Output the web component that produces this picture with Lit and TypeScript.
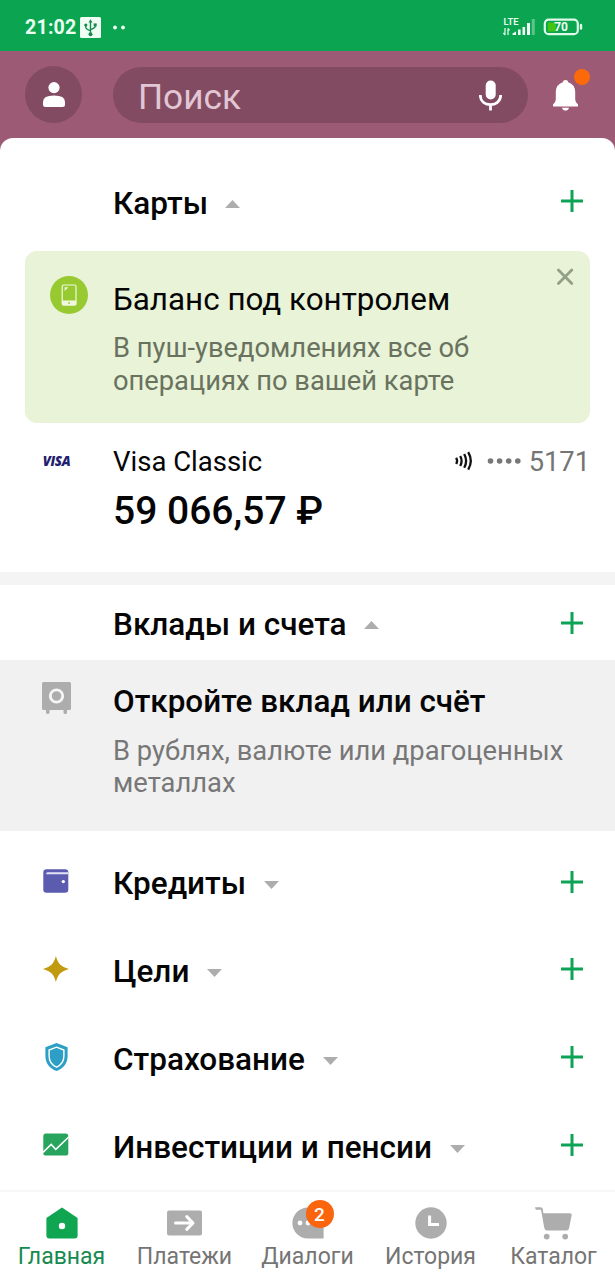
import { LitElement, html, css, svg, nothing, TemplateResult } from "lit";
import { customElement, property } from "lit/decorators.js";

const plus = svg`<path d="M0 11H22M11 0V22" stroke="#0fa356" stroke-width="3" fill="none"/>`;

const wallet = html`<svg width="26" height="24" viewBox="0 0 26 24">
  <rect x="0.3" y="0.3" width="25" height="23.4" rx="3.2" fill="#5b5bb0"/>
  <path d="M3.2 4.5Q3.4 3.2 4.8 3.2H25V5.2H3.2Z" fill="#e3e3f6"/>
  <circle cx="20.3" cy="12.6" r="1.7" fill="#fff"/></svg>`;

const star = html`<svg width="26" height="26" viewBox="0 0 26 26">
  <path d="M12.9 0C14.8 7.4 17.8 10.8 26 13C17.8 15.2 14.8 18.6 12.9 26C11 18.6 8 15.2 0 13C8 10.8 11 7.4 12.9 0Z" fill="#c29a0f"/></svg>`;

const shield = html`<svg width="23" height="28" viewBox="0 0 23 28">
  <path d="M11.5 0L22.6 4.2V13C22.6 20 18.6 25.5 11.5 28C4.4 25.5 0.4 20 0.4 13V4.2Z" fill="#2d9fc6"/>
  <path d="M11.5 4.2L18.9 7V13C18.9 18 16.3 22 11.5 24.2C6.7 22 4.1 18 4.1 13V7Z" fill="none" stroke="#fff" stroke-width="1.4"/></svg>`;

const chart = html`<svg width="26" height="23" viewBox="0 0 26 23">
  <rect x="0.3" y="0.5" width="25" height="22" rx="2.6" fill="#27a55f"/>
  <path d="M0 19.4L8.2 11.4L12.8 16.4L26 3.8" fill="none" stroke="#fff" stroke-width="1.5"/></svg>`;

@customElement("section-row")
export class SectionRow extends LitElement {
  @property() heading = "";
  @property({ type: Boolean }) open = false;
  @property({ attribute: false }) icon: TemplateResult | typeof nothing = nothing;

  static styles = css`
    :host { display: block; height: 87.8px; }
    .row { height: 100%; display: grid; grid-template-columns: 112.5px 1fr 22px; padding-right: 32.5px; align-items: center; }
    .icon { display: flex; justify-content: center; }
    .title { display: flex; align-items: center; gap: 18px; padding: 6px 0 0 0.5px; }
    .opened .title { gap: 17px; }
    .closed .caret { margin-top: 2px; }
    h2 { margin: 0; font-size: 31.5px; line-height: 36px; font-weight: 500; color: #050505; white-space: nowrap; }
    svg { display: block; }
    .plus { margin-top: 1px; }
  `;

  render() {
    return html`<div class="row ${this.open ? "opened" : "closed"}">
      <div class="icon">${this.icon}</div>
      <div class="title">
        <h2>${this.heading}</h2>
        <svg class="caret" width="15" height="8" viewBox="0 0 15 8">
          <path d=${this.open ? "M0 8L7.5 0L15 8Z" : "M0 0H15L7.5 8Z"} fill="#adadad"/>
        </svg>
      </div>
      <svg class="plus" width="22" height="22" viewBox="0 0 22 22">${plus}</svg>
    </div>`;
  }
}

@customElement("app-root")
export class AppRoot extends LitElement {
  static styles = css`
    :host { display: flex; flex-direction: column; height: 1280px; width: 615px; overflow: hidden;
      background: #fff; font-family: Roboto, "Noto Sans", sans-serif; color: #050505; }
    svg { display: block; }
    .status { height: 51px; background: #0ba551; display: flex; align-items: center; justify-content: space-between;
      padding: 3px 32px 0 25px; box-sizing: border-box; color: #eafff0; }
    .status-side { display: flex; align-items: center; }
    .clock { font-size: 19.6px; font-weight: 700; letter-spacing: 0.2px; width: 55px; }
    .top { background: #9c5a75; height: 99px; padding: 15px 36px 0 25px; box-sizing: border-box; display: flex; align-items: flex-start; }
    .avatar { width: 57px; height: 57px; border-radius: 50%; background: #834b62; display: grid; place-items: center; margin-right: 31px; }
    .search { width: 415px; height: 56px; margin-top: 1px; border-radius: 28px; background: #834b62; display: flex; align-items: center;
      justify-content: space-between; padding: 4px 26px 0 25px; box-sizing: border-box; font-size: 35.2px; color: #e2c6d3; }
    .search svg { margin-top: -4px; }
    .bell { position: relative; margin: 14px 0 0 25px; }
    .dot { position: absolute; left: 21px; top: -11px; width: 16px; height: 16px; border-radius: 50%; background: #fb6a0a; }
    .sheet { margin-top: -12px; background: #fff; border-radius: 13px 13px 0 0; padding-top: 19px; flex: 1; min-height: 0; }
    .banner { margin: 6px 25px 0; height: 172px; border-radius: 12px; background: #e8f3d7; box-sizing: border-box;
      display: grid; grid-template-columns: 63px 1fr 18px; padding: 25px 16px 0 25px; }
    .banner-title { font-size: 31.4px; line-height: 36px; padding-top: 6px; white-space: nowrap; }
    .sub { font-size: 27.3px; line-height: 32.6px; color: #68725f; white-space: nowrap; }
    .banner .sub { padding-top: 14.6px; }
    .close { margin-top: -8px; }
    .card { display: grid; grid-template-columns: 113px 1fr auto; padding-right: 25px; height: 149px; box-sizing: border-box; padding-top: 22px; align-content: start; }
    .visa { font: italic 800 13.2px/32px "Open Sans", sans-serif; color: #22206e; text-align: center; letter-spacing: -0.4px; }
    .name { font-size: 27.5px; line-height: 34px; }
    .digits { display: flex; align-items: flex-start; font-size: 27.3px; line-height: 34px; color: #757575; }
    .digits svg { margin-top: 6px; }
    .amount { grid-column: 2; font-size: 39px; line-height: 44px; font-weight: 500; padding-top: 10px; white-space: nowrap; }
    .gap { height: 13px; background: #f4f4f4; }
    .compact { height: 75px; }
    .offer { height: 171.5px; background: #f1f1f1; display: grid; grid-template-columns: 113px 1fr; margin-bottom: 6px; box-sizing: border-box; padding-top: 22px; }
    .offer-title { font-size: 31.45px; line-height: 36px; font-weight: 500; padding-top: 2px; white-space: nowrap; }
    .offer .sub { font-size: 27.35px; color: #777; padding-top: 15px; }
    .safe { display: flex; justify-content: center; }
    .nav { height: 90px; border-top: 2px solid #f7f7f7; box-sizing: border-box; display: grid; grid-template-columns: repeat(5, 1fr); background: #fff; }
    .tab { display: flex; flex-direction: column; align-items: center; font-size: 23px; line-height: 28px; color: #757575; padding-top: 11px; }
    .tab.active { color: #178a50; }
    .glyph { position: relative; height: 40px; display: flex; align-items: center; }
    .badge { position: absolute; left: 14px; top: -3px; width: 28px; height: 28px; border-radius: 50%; background: #fb650d;
      color: #fff; font-size: 19px; font-weight: 500; line-height: 29px; text-align: center; }
  `;

  render() {
    return html`
      <div class="status">
        <div class="status-side">
          <span class="clock">21:02</span>
          <svg width="50" height="21" viewBox="0 0 50 21">
            <rect width="21" height="21" rx="1.5" fill="#effff4"/>
            <g stroke="#168b4d" stroke-width="1.4" fill="none">
              <path d="M10.5 5V17M5.8 8V10.5Q6 12 10.5 13.8M15.2 8V9.3Q15 11 10.5 12.6"/></g>
            <g fill="#168b4d"><circle cx="10.5" cy="17.3" r="2"/><path d="M10.5 2.2L12.5 5.6H8.5Z"/>
              <circle cx="5.8" cy="8" r="1.6"/><rect x="13.7" y="6.4" width="3" height="3"/></g>
            <g fill="#effff4"><circle cx="35" cy="10.5" r="1.9"/><circle cx="43" cy="10.5" r="1.9"/></g>
          </svg>
        </div>
        <svg width="80" height="20" viewBox="0 0 80 20">
          <text x="0.6" y="7.6" font-family="Roboto" font-size="9.4" font-weight="600" fill="#eafff0" textLength="15" lengthAdjust="spacingAndGlyphs">LTE</text>
          <path d="M2 11V18M0.4 16L2 18M5 18V11.5M6.6 13.4L5 11.5" stroke="#d8f8e2" stroke-width="1.3" fill="none"/>
          <g fill="#effff4"><path d="M9.5 18V16.5L13 14.5V18Z"/><rect x="15" y="12.5" width="2.6" height="5.5"/>
            <rect x="19.5" y="10" width="2.6" height="8"/><rect x="24" y="6" width="3" height="12"/></g>
          <rect x="28.8" y="2" width="3" height="16" fill="#5cc48a"/>
          <rect x="41.8" y="2.6" width="33" height="14.6" rx="4" fill="none" stroke="#dffae8" stroke-width="2.2"/>
          <rect x="76.8" y="6.8" width="2.4" height="6" rx="1.2" fill="#dffae8"/>
          <rect x="44.8" y="5.4" width="8" height="9" rx="1" fill="#43c411"/>
          <text x="51.2" y="14.2" font-family="Roboto" font-size="12" font-weight="700" fill="#effff4">70</text>
        </svg>
      </div>
      <div class="top">
        <div class="avatar">
          <svg width="22" height="25" viewBox="0 0 22 25"><g fill="#fff"><circle cx="11" cy="5.6" r="5.6"/>
            <path d="M0 20Q0 13.6 11 13.6T22 20V22.5Q22 25 19.5 25H2.5Q0 25 0 22.5Z"/></g></svg>
        </div>
        <div class="search"><span>Поиск</span>
          <svg width="23" height="31" viewBox="0 0 23 31"><rect x="6.7" y="0.5" width="10" height="19" rx="5" fill="#fff"/>
            <path d="M1.3 15C1.3 21 5.5 24.6 11.5 24.6S21.7 21 21.7 15M11.5 24.6V30.4" stroke="#fff" stroke-width="2.8" fill="none"/></svg>
        </div>
        <div class="bell">
          <svg width="25" height="31" viewBox="0 0 25 31"><path d="M12.5 0Q15 0 15.2 2.2Q22 4.3 22.2 12V19.5Q22.3 22.5 25 24.6V26.6H0V24.6Q2.7 22.5 2.8 19.5V12Q3 4.3 9.8 2.2Q10 0 12.5 0ZM9 27.8H16Q15.3 30.6 12.5 30.6T9 27.8Z" fill="#fff"/></svg>
          <span class="dot"></span>
        </div>
      </div>
      <div class="sheet">
        <section-row heading="Карты" open></section-row>
        <div class="banner">
          <svg width="38" height="38" viewBox="0 0 38 38"><circle cx="19" cy="19" r="19" fill="#97ca30"/>
            <rect x="12.2" y="9" width="13.8" height="20" rx="1.4" fill="none" stroke="#f0f9df" stroke-width="1.2"/>
            <path d="M12 24.5H26.2V28.5Q26.2 29.5 25 29.5H13.2Q12 29.5 12 28.5Z" fill="#f0f9df"/>
            <path d="M14.6 11.3H18.4L14.6 15Z" fill="#f0f9df"/><circle cx="19.1" cy="27" r="0.9" fill="#97ca30"/></svg>
          <div>
            <div class="banner-title">Баланс под контролем</div>
            <div class="sub">В пуш-уведомлениях все об<br>операциях по вашей карте</div>
          </div>
          <svg class="close" width="18" height="18" viewBox="0 0 18 18"><path d="M2.4 2L15.8 15.4M15.8 2L2.4 15.4" stroke="#93a088" stroke-width="2.8" stroke-linecap="round"/></svg>
        </div>
        <div class="card">
          <div class="visa">VISA</div>
          <div class="name">Visa Classic</div>
          <div class="digits">
            <svg width="74" height="20" viewBox="0 0 74 20">
              <path d="M1.2 6.8Q3 10 1.2 13M5.2 5Q8 10 5.2 15M9.2 3Q13 10 9.2 16.8M13.2 1.2Q18.4 10 13.2 18.6" stroke="#111" stroke-width="2.3" fill="none"/>
              <g fill="#777"><circle cx="35.5" cy="10" r="2.8"/><circle cx="44.6" cy="10" r="2.8"/><circle cx="53.7" cy="10" r="2.8"/><circle cx="62.8" cy="10" r="2.8"/></g>
            </svg>
            <span>5171</span>
          </div>
          <div class="amount">59 066,57 ₽</div>
        </div>
        <div class="gap"></div>
        <section-row class="compact" heading="Вклады и счета" open></section-row>
        <div class="offer">
          <div class="safe"><svg width="29" height="32" viewBox="0 0 29 32"><path d="M1.5 0H27.5Q29 0 29 1.5V26.5Q29 28 27.5 28H25V30.5Q25 32 23.3 32T21.5 30.5V28H7.5V30.5Q7.5 32 5.8 32T4 30.5V28H1.5Q0 28 0 26.5V1.5Q0 0 1.5 0Z" fill="#adadad"/>
            <circle cx="14.5" cy="14" r="6.2" fill="none" stroke="#f6f6f6" stroke-width="2.8"/></svg></div>
          <div>
            <div class="offer-title">Откройте вклад или счёт</div>
            <div class="sub">В рублях, валюте или драгоценных<br>металлах</div>
          </div>
        </div>
        <section-row heading="Кредиты" .icon=${wallet}></section-row>
        <section-row heading="Цели" .icon=${star}></section-row>
        <section-row heading="Страхование" .icon=${shield}></section-row>
        <section-row heading="Инвестиции и пенсии" .icon=${chart}></section-row>
      </div>
      <div class="nav">
        <div class="tab active"><div class="glyph"><svg width="32" height="32" viewBox="0 0 32 32">
          <path d="M16 0.5L31.6 11V28.5Q31.6 31.5 28.6 31.5H3.4Q0.4 31.5 0.4 28.5V11Z" fill="#0fa551"/><circle cx="16" cy="19" r="3.2" fill="#fff"/></svg></div>Главная</div>
        <div class="tab"><div class="glyph"><svg width="35" height="32" viewBox="0 0 35 32">
          <rect y="3.6" width="35" height="25" rx="2" fill="#adadad"/>
          <path d="M8.5 16H25.5M19.8 9.6L26 16L19.8 22.4" fill="none" stroke="#fff" stroke-width="3" stroke-linecap="round" stroke-linejoin="round"/></svg></div>Платежи</div>
        <div class="tab"><div class="glyph"><svg width="32" height="32" viewBox="0 0 32 32">
          <path d="M16 0.4A15.6 15.6 0 0 1 31.6 16V31.6H16A15.6 15.6 0 0 1 16 0.4Z" fill="#adadad"/>
          <g fill="#fff"><circle cx="8" cy="16" r="2.4"/><circle cx="16" cy="16" r="2.4"/></g></svg>
          <span class="badge">2</span></div>Диалоги</div>
        <div class="tab"><div class="glyph"><svg width="32" height="32" viewBox="0 0 32 32">
          <circle cx="16" cy="16" r="15.7" fill="#adadad"/><path d="M14.6 8.5V17.4H24" fill="none" stroke="#fff" stroke-width="3"/></svg></div>История</div>
        <div class="tab"><div class="glyph"><svg width="37" height="34" viewBox="0 0 37 34">
          <g fill="#adadad"><path d="M0 1.2H5.6Q7.4 1.2 7.8 3L8.4 7.2H35Q37 7.2 36.7 9L34 22.4Q33.6 24.4 31.6 24.4H12Q9.7 24.4 9.3 22L6 3.8H0.8Z"/>
            <circle cx="11.7" cy="30.6" r="2.9"/><circle cx="30.2" cy="30.6" r="2.9"/></g></svg></div>Каталог</div>
      </div>`;
  }
}
